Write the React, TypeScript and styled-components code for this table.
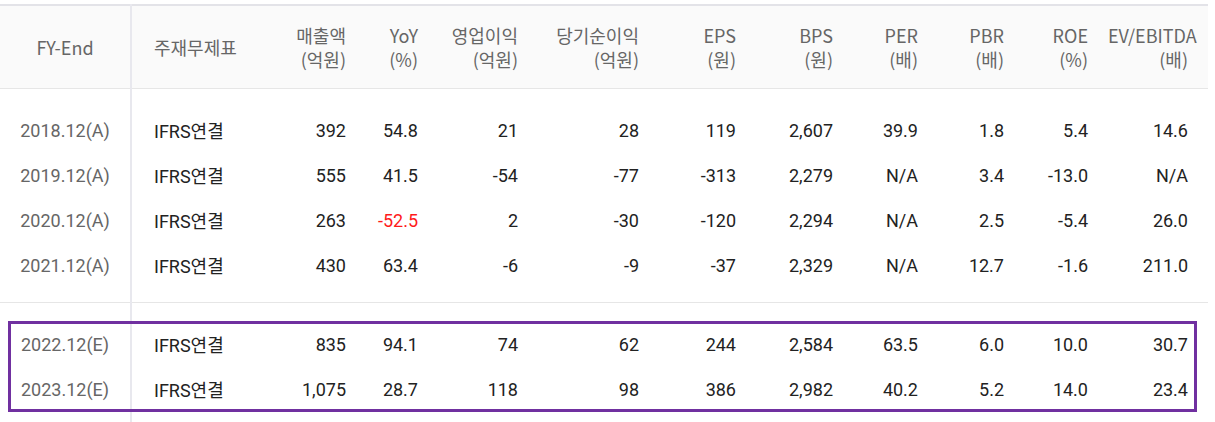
import { createGlobalStyle, styled } from "styled-components";

const GlobalStyle = createGlobalStyle`
  html, body {
    margin: 0;
    padding: 0;
    background: #fff;
  }
`;

const Wrapper = styled.div`
  position: relative;
  width: 1215px;
  height: 422px;
  overflow: hidden;
  padding-top: 4px;
  box-sizing: border-box;
`;

const Table = styled.table`
  width: 1208px;
  border-collapse: collapse;
  table-layout: fixed;
  border-top: 2px solid #e3e3e8;
  font-family: Roboto, "Noto Sans CJK KR", sans-serif;
`;

const HeadCell = styled.th<{ $align?: "left" | "center" | "right" }>`
  height: 82px;
  padding: 0 ${(p) => (p.$align === "right" || !p.$align ? "20px" : "0")} 0
    ${(p) => (p.$align === "left" ? "22px" : "0")};
  background: #fafafa;
  border-bottom: 1px solid #e6e6e6;
  color: #666;
  font-family: "Noto Sans CJK KR", sans-serif;
  font-size: 18px;
  font-weight: 400;
  line-height: 24px;
  text-align: ${(p) => p.$align ?? "right"};
  vertical-align: middle;
  white-space: nowrap;

  &:first-child {
    border-right: 2px solid #e8e8ee;
  }
`;

const Group = styled.tbody`
  & + & {
    border-top: 1px solid #e6e6e6;
  }
`;

const Spacer = styled.tr<{ $h: number }>`
  height: ${(p) => p.$h}px;

  td:first-child {
    border-right: 2px solid #e8e8ee;
  }
`;

const Row = styled.tr`
  height: 45px;
`;

const Cell = styled.td<{ $negative?: boolean }>`
  padding: 0 20px 0 0;
  color: ${(p) => (p.$negative ? "#ff1a1a" : "#222")};
  font-size: 18px;
  text-align: right;
  vertical-align: middle;
  white-space: nowrap;
`;

const PeriodCell = styled.td`
  padding: 0;
  border-right: 2px solid #e8e8ee;
  color: #666;
  font-size: 18px;
  text-align: center;
  vertical-align: middle;
`;

const StatementCell = styled.td`
  padding: 0 0 0 22px;
  color: #222;
  font-size: 18px;
  text-align: left;
  vertical-align: middle;
  white-space: nowrap;
`;

const Highlight = styled.div`
  position: absolute;
  left: 8px;
  top: 321px;
  width: 1189px;
  height: 91px;
  box-sizing: border-box;
  border: 3px solid #7030a0;
  pointer-events: none;
`;

const widths = [131, 129, 106, 72, 100, 121, 97, 97, 85, 86, 84, 100];

const headers: [string, string?][] = [
  ["매출액", "(억원)"],
  ["YoY", "(%)"],
  ["영업이익", "(억원)"],
  ["당기순이익", "(억원)"],
  ["EPS", "(원)"],
  ["BPS", "(원)"],
  ["PER", "(배)"],
  ["PBR", "(배)"],
  ["ROE", "(%)"],
  ["EV/EBITDA", "(배)"],
];

type RowData = { period: string; values: string[] };

const actual: RowData[] = [
  { period: "2018.12(A)", values: ["392", "54.8", "21", "28", "119", "2,607", "39.9", "1.8", "5.4", "14.6"] },
  { period: "2019.12(A)", values: ["555", "41.5", "-54", "-77", "-313", "2,279", "N/A", "3.4", "-13.0", "N/A"] },
  { period: "2020.12(A)", values: ["263", "-52.5", "2", "-30", "-120", "2,294", "N/A", "2.5", "-5.4", "26.0"] },
  { period: "2021.12(A)", values: ["430", "63.4", "-6", "-9", "-37", "2,329", "N/A", "12.7", "-1.6", "211.0"] },
];

const estimate: RowData[] = [
  { period: "2022.12(E)", values: ["835", "94.1", "74", "62", "244", "2,584", "63.5", "6.0", "10.0", "30.7"] },
  { period: "2023.12(E)", values: ["1,075", "28.7", "118", "98", "386", "2,982", "40.2", "5.2", "14.0", "23.4"] },
];

function DataRow({ period, values }: RowData) {
  return (
    <Row>
      <PeriodCell>{period}</PeriodCell>
      <StatementCell>IFRS연결</StatementCell>
      {values.map((v, i) => (
        // YoY column is coloured red when it drops
        <Cell key={i} $negative={i === 1 && v.startsWith("-")}>
          {v}
        </Cell>
      ))}
    </Row>
  );
}

function SpacerRow({ h }: { h: number }) {
  return (
    <Spacer $h={h}>
      <td />
      <td colSpan={11} />
    </Spacer>
  );
}

export default function App() {
  return (
    <>
      <GlobalStyle />
      <Wrapper>
        <Table>
          <colgroup>
            {widths.map((w, i) => (
              <col key={i} style={{ width: w }} />
            ))}
          </colgroup>
          <thead>
            <tr>
              <HeadCell $align="center">FY-End</HeadCell>
              <HeadCell $align="left">주재무제표</HeadCell>
              {headers.map(([top, bottom]) => (
                <HeadCell key={top}>
                  {top}
                  <br />
                  {bottom}
                </HeadCell>
              ))}
            </tr>
          </thead>
          <Group>
            <SpacerRow h={19} />
            {actual.map((r) => (
              <DataRow key={r.period} {...r} />
            ))}
            <SpacerRow h={15} />
          </Group>
          <Group>
            <SpacerRow h={19} />
            {estimate.map((r) => (
              <DataRow key={r.period} {...r} />
            ))}
            <SpacerRow h={30} />
          </Group>
        </Table>
        <Highlight />
      </Wrapper>
    </>
  );
}
